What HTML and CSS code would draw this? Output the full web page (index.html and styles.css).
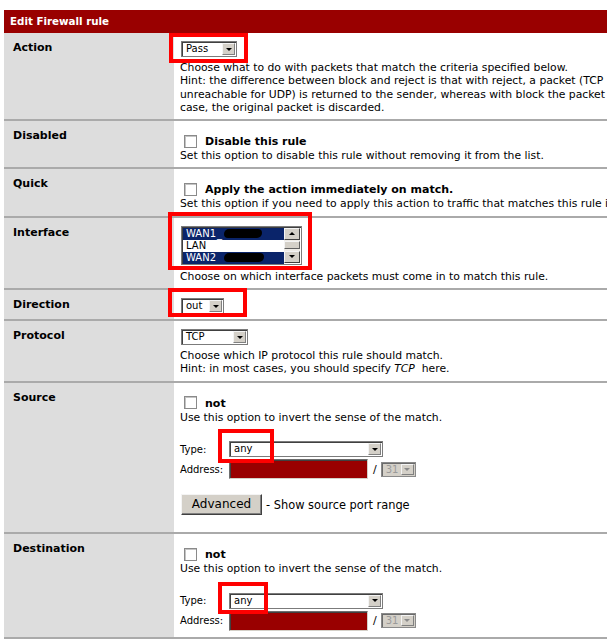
FILE: index.html
```html
<!DOCTYPE html>
<html>
<head>
<meta charset="utf-8">
<link rel="stylesheet" href="styles.css">
</head>
<body>
<div class="page">
  <div class="topic">Edit Firewall rule</div>

  <div class="row">
    <div class="lbl">Action</div>
    <div class="val">
      <div class="sel w-action"><span class="st">Pass</span><span class="sb"><i class="tri"></i></span></div>
      <div class="desc after-sel">Choose what to do with packets that match the criteria specified below.<br>Hint: the difference between block and reject is that with reject, a packet (TCP RST or ICMP port<br>unreachable for UDP) is returned to the sender, whereas with block the packet is dropped silently. In either<br>case, the original packet is discarded.</div>
    </div>
  </div>

  <div class="row">
    <div class="lbl">Disabled</div>
    <div class="val">
      <div class="chk-line"><span class="cb"></span><span class="chk-text">Disable this rule</span></div>
      <div class="desc">Set this option to disable this rule without removing it from the list.</div>
    </div>
  </div>

  <div class="row">
    <div class="lbl">Quick</div>
    <div class="val">
      <div class="chk-line"><span class="cb"></span><span class="chk-text">Apply the action immediately on match.</span></div>
      <div class="desc">Set this option if you need to apply this action to traffic that matches this rule immediately.</div>
    </div>
  </div>

  <div class="row">
    <div class="lbl">Interface</div>
    <div class="val">
      <div class="lb">
        <div class="lb-items">
          <div class="lb-item on">WAN1<span class="us">_</span><span class="blob b1"></span></div>
          <div class="lb-item">LAN</div>
          <div class="lb-item on">WAN2<span class="blob b2"></span></div>
        </div>
        <div class="sbar">
          <span class="sbtn"><i class="tri up"></i></span>
          <span class="track"><span class="thumb"></span></span>
          <span class="sbtn"><i class="tri"></i></span>
        </div>
      </div>
      <div class="desc">Choose on which interface packets must come in to match this rule.</div>
    </div>
  </div>

  <div class="row">
    <div class="lbl">Direction</div>
    <div class="val">
      <div class="sel w-dir"><span class="st">out</span><span class="sb"><i class="tri"></i></span></div>
    </div>
  </div>

  <div class="row">
    <div class="lbl">Protocol</div>
    <div class="val">
      <div class="sel w-proto"><span class="st">TCP</span><span class="sb"><i class="tri"></i></span></div>
      <div class="desc after-sel">Choose which IP protocol this rule should match.<br>Hint: in most cases, you should specify <i>TCP</i> &nbsp;here.</div>
    </div>
  </div>

  <div class="row">
    <div class="lbl">Source</div>
    <div class="val">
      <div class="chk-line"><span class="cb"></span><span class="chk-text">not</span></div>
      <div class="desc">Use this option to invert the sense of the match.<br>&nbsp;</div>
      <div class="addr">
        <span class="al">Type:</span>
        <div class="sel w-type"><span class="st">any</span><span class="sb"><i class="tri"></i></span></div>
        <span class="al">Address:</span>
        <div class="addr-in"><span class="inp"></span><span class="slash">/</span><div class="sel w-mask dis"><span class="st">31</span><span class="sb"><i class="tri"></i></span></div></div>
      </div>
      <div class="adv"><span class="btn">Advanced</span><span class="adv-t">- Show source port range</span></div>
    </div>
  </div>

  <div class="row">
    <div class="lbl">Destination</div>
    <div class="val">
      <div class="chk-line"><span class="cb"></span><span class="chk-text">not</span></div>
      <div class="desc">Use this option to invert the sense of the match.<br>&nbsp;</div>
      <div class="addr last">
        <span class="al">Type:</span>
        <div class="sel w-type"><span class="st">any</span><span class="sb"><i class="tri"></i></span></div>
        <span class="al">Address:</span>
        <div class="addr-in"><span class="inp"></span><span class="slash">/</span><div class="sel w-mask dis"><span class="st">31</span><span class="sb"><i class="tri"></i></span></div></div>
      </div>
    </div>
  </div>

  <div class="mark m-action"></div>
  <div class="mark m-iface"></div>
  <div class="mark m-dir"></div>
  <div class="mark m-srctype"></div>
  <div class="mark m-dsttype"></div>
</div>
</body>
</html>
```

FILE: styles.css
```css
html, body {
  margin: 0;
  padding: 0;
  background: #fff;
}
body {
  font-family: "DejaVu Sans", Verdana, sans-serif;
  color: #000;
}
.page {
  position: relative;
  width: 603px;
  margin: 10px 0 0 4px;
  overflow: hidden;
}
.topic {
  height: 23px;
  line-height: 23px;
  background: #990000;
  color: #fff;
  font-weight: bold;
  font-size: 10.3px;
  padding-left: 6px;
}
.row {
  display: grid;
  grid-template-columns: 170px 433px;
  border-bottom: 2px solid #aaaaaa;
}
.lbl {
  background: #dddddd;
  padding: 8px 0 0 9px;
  font-weight: bold;
  font-size: 11px;
  line-height: 13px;
}
.val {
  padding: 8px 0 5px 6px;
  overflow: hidden;
  white-space: nowrap;
  background: #fff;
}
.desc {
  font-size: 10.8px;
  line-height: 13.3px;
}
.after-sel {
  margin-top: 4px;
}

/* select */
.sel {
  display: flex;
  box-sizing: border-box;
  height: 16px;
  margin-left: 1px;
  border: 1px solid #7b7b7b;
  box-shadow: inset 1px 1px 0 #404040;
  background: #fff;
}
.st {
  flex: 1;
  font-size: 10px;
  line-height: 14px;
  padding-left: 4px;
  overflow: hidden;
}
.sb {
  width: 13px;
  height: 12px;
  margin: 1px 1px 0 0;
  box-sizing: border-box;
  background: #d4d0c8;
  border: 1px solid;
  border-color: #f4f4f4 #808080 #808080 #f4f4f4;
  display: flex;
  align-items: center;
  justify-content: center;
}
.tri {
  display: block;
  width: 0;
  height: 0;
  border-left: 3px solid transparent;
  border-right: 3px solid transparent;
  border-top: 3px solid #000;
}
.tri.up {
  border-top: 0;
  border-bottom: 3px solid #000;
}
.w-action { width: 56px; }
.w-dir { width: 43px; }
.w-proto { width: 67px; }
.w-type { width: 154px; margin-left: 0; }
.w-mask { width: 35px; height: 15px; margin-left: 0; }
.sel.dis {
  background: #d4d0c8;
  border-color: #8a8a8a;
  box-shadow: inset 1px 1px 0 #6a6a6a;
}
.sel.dis .st {
  color: #9a9a9a;
  line-height: 13px;
}
.sel.dis .sb {
  height: 11px;
}
.sel.dis .tri {
  border-top-color: #8a8a8a;
}

/* checkbox */
.chk-line {
  display: flex;
  align-items: center;
  height: 16px;
  margin-top: 4px;
}
.cb {
  width: 11px;
  height: 11px;
  margin-left: 4px;
  margin-right: 8px;
  border: 1px solid #8a8a8a;
  box-shadow: inset 1px 1px 0 #c4c4c4;
  background: #fff;
}
.chk-text {
  font-weight: bold;
  font-size: 11px;
  line-height: 16px;
  padding-top: 2px;
}

/* listbox */
.lb {
  display: flex;
  box-sizing: border-box;
  width: 121px;
  height: 39px;
  margin-left: 1px;
  margin-bottom: 5px;
  border: 1px solid #7b7b7b;
  box-shadow: inset 1px 1px 0 #404040;
  background: #fff;
}
.lb-items {
  flex: 1;
  padding: 1px 0 0 1px;
  overflow: hidden;
}
.lb-item {
  height: 12px;
  line-height: 12px;
  font-size: 10px;
  padding-left: 3px;
  display: flex;
  align-items: center;
}
.lb-item.on {
  background: #0a246a;
  color: #fff;
}
.us {
  margin-left: 1px;
}
.blob {
  display: block;
  height: 9px;
  background: #000;
  border-radius: 5px 4px 5px 4px;
}
.b1 { width: 38px; margin-left: 2px; }
.b2 { width: 40px; margin-left: 8px; }
.sbar {
  width: 16px;
  display: flex;
  flex-direction: column;
  padding: 1px 1px 1px 0;
}
.sbtn {
  box-sizing: border-box;
  height: 12px;
  background: #d4d0c8;
  border: 1px solid;
  border-color: #f4f4f4 #404040 #404040 #f4f4f4;
  display: flex;
  align-items: center;
  justify-content: center;
}
.track {
  flex: 1;
  background: #eeebe6;
  padding-top: 1px;
}
.thumb {
  display: block;
  box-sizing: border-box;
  height: 8px;
  background: #d4d0c8;
  border: 1px solid;
  border-color: #f4f4f4 #606060 #606060 #f4f4f4;
}

/* address block */
.addr {
  display: grid;
  grid-template-columns: 49px auto;
  row-gap: 2px;
  align-items: center;
  justify-content: start;
  margin-top: 4px;
}
.addr.last {
  margin-bottom: 1px;
}
.al {
  font-size: 10px;
  line-height: 13px;
}
.addr-in {
  display: flex;
  align-items: center;
}
.inp {
  box-sizing: border-box;
  width: 139px;
  height: 20px;
  background: #990000;
  border: 1px solid;
  border-color: #6e6e6e #d4d0c8 #d4d0c8 #6e6e6e;
  box-shadow: inset 1px 1px 0 #404040;
}
.slash {
  font-size: 11px;
  margin: 0 4px 0 5px;
}
.adv {
  display: flex;
  align-items: center;
  margin-top: 15px;
  margin-bottom: 12px;
}
.btn {
  box-sizing: border-box;
  width: 81px;
  height: 21px;
  margin-left: 1px;
  background: #d4d0c8;
  border: 1px solid;
  border-color: #f4f4f4 #404040 #404040 #f4f4f4;
  box-shadow: inset -1px -1px 0 #808080;
  font-size: 12px;
  line-height: 19px;
  text-align: center;
}
.adv-t {
  font-size: 11.4px;
  margin-left: 4px;
}

/* red annotation boxes */
.mark {
  position: absolute;
  box-sizing: border-box;
  border: 4px solid #ff0000;
}
.m-action { left: 165px; top: 23px; width: 79px; height: 30px; }
.m-iface { left: 164px; top: 202px; width: 144px; height: 58px; }
.m-dir { left: 164px; top: 278px; width: 79px; height: 29px; }
.m-srctype { left: 214px; top: 419px; width: 56px; height: 34px; }
.m-dsttype { left: 214px; top: 572px; width: 50px; height: 32px; }
```
